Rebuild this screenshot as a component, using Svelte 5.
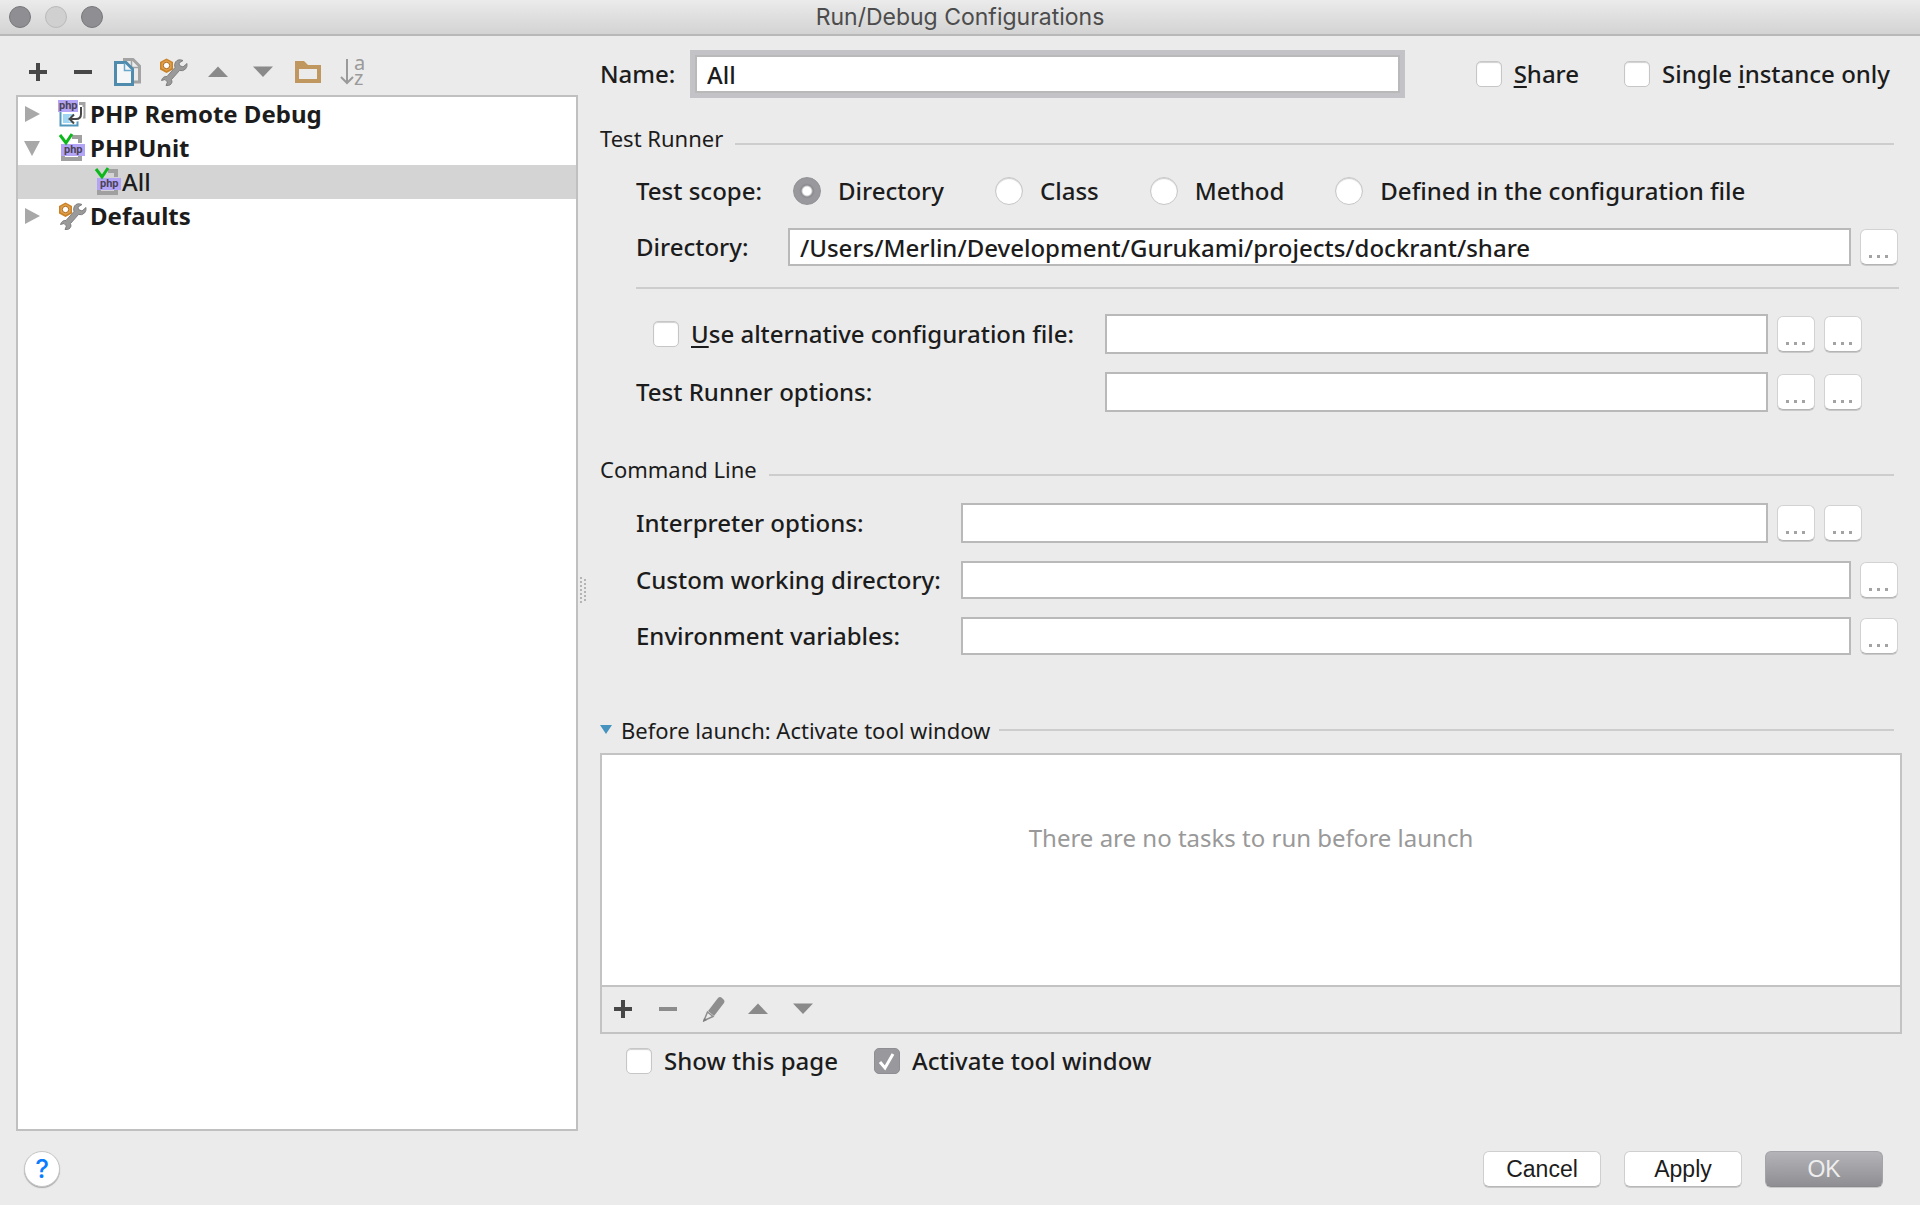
<script>
	let name = $state('All');
	let scope = $state('directory');
	let directory = $state('/Users/Merlin/Development/Gurukami/projects/dockrant/share');
	let share = $state(false);
	let single = $state(false);
	let alternative = $state(false);
	let showPage = $state(false);
	let activate = $state(true);

	const scopes = [
		{ id: 'directory', label: 'Directory' },
		{ id: 'class', label: 'Class' },
		{ id: 'method', label: 'Method' },
		{ id: 'file', label: 'Defined in the configuration file' },
	];

	const commandRows = [
		{ id: 'interpreter', label: 'Interpreter options:', buttons: 2 },
		{ id: 'workdir', label: 'Custom working directory:', buttons: 1 },
		{ id: 'env', label: 'Environment variables:', buttons: 1 },
	];

	const tree = [
		{ label: 'PHP Remote Debug', icon: 'remote', arrow: 'closed' },
		{ label: 'PHPUnit', icon: 'phpunit', arrow: 'open' },
		{ label: 'All', icon: 'phpunit', child: true },
		{ label: 'Defaults', icon: 'defaults', arrow: 'closed' },
	];

	const treeTools = [
		['add', 'Add'],
		['remove', 'Remove'],
		['copy', 'Copy'],
		['defaults', 'Edit defaults'],
		['up', 'Move up'],
		['down', 'Move down'],
		['folder', 'Create folder'],
		['sort', 'Sort'],
	];

	const taskTools = [
		['add', 'Add task'],
		['remove-off', 'Remove task'],
		['edit', 'Edit task'],
		['up', 'Move task up'],
		['down', 'Move task down'],
	];
</script>

{#snippet icon(kind)}
	<svg class="icon" viewBox="0 0 28 28" aria-hidden="true">
		{#if kind == 'add'}
			<path d="M5 14h18M14 5v18" stroke="#474747" stroke-width="4" />
		{:else if kind == 'remove'}
			<path d="M5 14h18" stroke="#474747" stroke-width="4" />
		{:else if kind == 'remove-off'}
			<path d="M5 14h18" stroke="#8c8c8c" stroke-width="4" />
		{:else if kind == 'up'}
			<path d="M4 19 14 8.500l10 10.500z" fill="#8a8a8a" />
		{:else if kind == 'down'}
			<path d="M4 8.500h20L14 19z" fill="#8a8a8a" />
		{:else if kind == 'copy'}
			<path d="M9 1.500h10l6.500 6.500V24h-6" fill="none" stroke="#a3a3a3" stroke-width="3" />
			<path d="M17.500 2v7.500h7" fill="none" stroke="#a3a3a3" stroke-width="1.500" />
			<path d="M1.500 4.500H12l6.500 6.500v15.500h-17z" fill="#f4f6f8" stroke="#4f8bad" stroke-width="3" />
			<path d="M10.500 5v7.500h7.500" fill="none" stroke="#6aa6c8" stroke-width="1.500" />
		{:else if kind == 'defaults'}
			<path d="M7.500.500l6.500 3.500v7.500L7.500 15 1 11.500V4z" fill="#c98227" />
			<path d="M7.500 2l5 2.700v5.600L7.500 13l-5-2.700V4.700z" fill="#e3a04a" />
			<circle cx="7.500" cy="7.500" r="3.200" fill="#fff" stroke="#a9661a" stroke-width="1" />
			<path
				d="M24 2.500q-5-2-7.500 1.500-1.500 2.500-.500 5.500L8 18.500q-4-.500-5.500 4l3.500-1 2.500 2.500-1.500 3.500q5 .500 6-3.500l-.500-2.500 8-9q3.500 1 6-1.500 2-2.500 1.500-5.500l-4 3.500-3.500-1.500-.500-2.500z"
				fill="#9a9a9a" stroke="#7f7f7f" stroke-width="1" />
		{:else if kind == 'folder'}
			<path d="M1 3h9l4 4h13v18H1zM5 11v10h18V11z" fill="#c0975f" fill-rule="evenodd" />
		{:else if kind == 'sort'}
			<path d="M8 1v23M2 19l6 6 6-6" fill="none" stroke="#9a9a9a" stroke-width="2" />
			<text x="15" y="12" font-size="20">a</text>
			<text x="15" y="27" font-size="20">z</text>
		{:else if kind == 'edit'}
			<path d="M19 3q2-2 4 0l2 2q1 1 0 3L15 21l-6-5z" fill="#8e8e8e" />
			<path d="M8.500 17l5.500 4.500-9 4z" fill="#ebebeb" stroke="#8e8e8e" stroke-width="1.500" />
			<path d="M4 27l1-4 3 2z" fill="#7d7d7d" />
		{:else if kind == 'remote'}
			<path d="M21 3.500h5V17h-5" fill="none" stroke="#a3a3a3" stroke-width="3" />
			<path d="M2.500 12v13.500h17V20" fill="none" stroke="#5297bd" stroke-width="2" />
			<path d="M5 14h11v9H5z" fill="#9fd6f3" />
			<path d="M23 7v8q0 4-4 4h-8" fill="none" stroke="#fff" stroke-width="5" />
			<path d="M23 7v7q0 5-5 5h-7M16 14.500l-4.500 4.500 4.500 4.500" fill="none" stroke="#474747" stroke-width="2" />
			<path d="M0 0h20v12H0z" fill="#b4a4f5" />
			<text class="php" x="1" y="9" font-size="11">php</text>
		{:else if kind == 'phpunit'}
			<path d="M14 3h8v6M5 21v4h17v-4" fill="none" stroke="#a0a0a0" stroke-width="4" />
			<path d="M3 10h24v12H3z" fill="#b4a4f5" />
			<text class="php" x="6" y="19" font-size="11">php</text>
			<path d="M2 1l6 8 6-9" fill="none" stroke="#0db81c" stroke-width="3" />
		{/if}
	</svg>
{/snippet}

{#snippet browse(count, what)}
	{#each Array(count) as _, i}
		<button class="browse" aria-label="{what} {i + 1}">
			<svg viewBox="0 0 36 36" aria-hidden="true">
				<path d="M8 25h3v3H8zM16 25h3v3h-3zM24 25h3v3h-3z" fill="#a3a3a3" />
			</svg>
		</button>
	{/each}
{/snippet}

<div class="dialog">
	<header class="titlebar">
		<div class="lights">
			<button aria-label="Close"></button>
			<button class="off" aria-label="Minimize"></button>
			<button aria-label="Zoom"></button>
		</div>
		<h1>Run/Debug Configurations</h1>
	</header>

	<main>
		<aside>
			<div class="tools">
				{#each treeTools as [kind, label]}
					<button class="tool" aria-label={label}>{@render icon(kind)}</button>
				{/each}
			</div>
			<ul class="tree">
				{#each tree as node}
					<li class:child={node.child}>
						<span class="arrow">
							{#if node.arrow == 'closed'}
								<svg viewBox="0 0 16 16"><path d="M1 0l15 8-15 8z" fill="#a8a8a8" /></svg>
							{:else if node.arrow == 'open'}
								<svg viewBox="0 0 16 16"><path d="M0 1h16L8 16z" fill="#a8a8a8" /></svg>
							{/if}
						</span>
						{@render icon(node.icon)}
						<span>{node.label}</span>
					</li>
				{/each}
			</ul>
		</aside>

		<div class="splitter">
			<svg width="8" height="28" viewBox="0 0 8 28" aria-hidden="true">
				<path d="M2 1v26" stroke="#b4b4b4" stroke-width="2" stroke-dasharray="2 2" />
				<path d="M6 3v24" stroke="#b4b4b4" stroke-width="2" stroke-dasharray="2 2" />
			</svg>
		</div>

		<section class="config">
			<div class="row name-row">
				<label for="name">Name:</label>
				<input id="name" class="focused" type="text" bind:value={name}>
				<label class="check share"><input type="checkbox" bind:checked={share}><span><u>S</u>hare</span></label>
				<label class="check"><input type="checkbox" bind:checked={single}><span>Single <u>i</u>nstance only</span></label>
			</div>

			<h2 class="first">Test Runner</h2>
			<div class="group">
				<div class="row scope">
					<span class="caption">Test scope:</span>
					{#each scopes as s}
						<label class="check"><input type="radio" name="scope" value={s.id} bind:group={scope}>{s.label}</label>
					{/each}
				</div>
				<div class="row dir">
					<label for="directory">Directory:</label>
					<input id="directory" type="text" bind:value={directory}>
					{@render browse(1, 'Browse directory')}
				</div>
				<hr>
				<div class="row wide two">
					<div class="caption">
						<label class="check alt"><input type="checkbox" bind:checked={alternative}><span><u>U</u>se alternative configuration file:</span></label>
					</div>
					<input type="text" aria-label="Alternative configuration file">
					{@render browse(2, 'Browse configuration file')}
				</div>
				<div class="row wide two">
					<label for="options">Test Runner options:</label>
					<input id="options" type="text">
					{@render browse(2, 'Edit test runner options')}
				</div>
			</div>

			<h2 class="second">Command Line</h2>
			<div class="group commands">
				{#each commandRows as row}
					<div class="row" class:two={row.buttons == 2}>
						<label for={row.id}>{row.label}</label>
						<input id={row.id} type="text">
						{@render browse(row.buttons, row.label)}
					</div>
				{/each}
			</div>

			<h2 class="launch">
				<svg width="12" height="10" viewBox="0 0 12 10" aria-hidden="true"><path d="M0 0h12L6 9z" fill="#4793bf" /></svg>
				Before launch: Activate tool window
			</h2>
			<div class="tasks">
				<p>There are no tasks to run before launch</p>
				<div class="tools">
					{#each taskTools as [kind, label]}
						<button class="tool" aria-label={label}>{@render icon(kind)}</button>
					{/each}
				</div>
			</div>
			<div class="row after">
				<label class="check"><input type="checkbox" bind:checked={showPage}>Show this page</label>
				<label class="check"><input type="checkbox" bind:checked={activate}>Activate tool window</label>
			</div>
		</section>
	</main>

	<footer>
		<button class="help" aria-label="Help">?</button>
		<div class="actions">
			<button>Cancel</button>
			<button>Apply</button>
			<button class="primary">OK</button>
		</div>
	</footer>
</div>

<style>
	:global(body) { margin:0; background:#ebebeb }
	.dialog {
		box-sizing: border-box;
		display: flex;
		flex-direction: column;
		min-height: 100vh;
		background: #ebebeb;
		color: #1c1c1c;
		font: 500 24px/30px "Noto Sans", "Open Sans", sans-serif;
	}
	button, input { font:inherit; color:inherit; margin:0; padding:0; box-sizing:border-box }
	h1, h2, ul, p { margin:0; padding:0; font-weight:400 }
	svg { display:block }
	u { text-decoration-thickness:2px; text-underline-offset:3px; text-decoration-skip-ink:none }

	.titlebar {
		display: grid;
		grid-template-columns: 1fr auto 1fr;
		align-items: center;
		height: 34px;
		border-bottom: 2px solid #b8b8b8;
		background: linear-gradient(#ebebeb, #d3d3d3);
	}
	.titlebar h1 { font:23px/30px Inter, Roboto, sans-serif; color:#4c4c4c }
	.lights { display:flex; gap:14px; padding-left:9px }
	.lights button { width:22px; height:22px; border:1px solid #77777c; border-radius:50%; background:#8e8e93 }
	.lights .off { border-color:#bababa; background:#d0d0d0 }

	main { flex:1; display:flex }
	aside { width:578px; flex:none; display:flex; flex-direction:column; padding-left:16px; box-sizing:border-box }
	.tools { display:flex; gap:17px; align-items:center; box-sizing:border-box }
	.tool { width:28px; height:28px; border:0; background:none }
	.icon { width:28px; height:28px; flex:none; overflow:visible }
	.icon text { font-family:"Noto Sans", sans-serif; font-weight:400; fill:#9a9a9a }
	.icon .php { font-family:Roboto, sans-serif; font-weight:700; fill:#4a4358 }
	aside .tools { height:59px; padding:12px 0 0 8px }
	.tree { flex:1; list-style:none; border:2px solid #c0c0c0; background:#fff }
	.tree li { display:flex; align-items:center; height:34px; font-weight:700; line-height:32px }
	.tree .icon { margin-right:4px }
	.tree .child { font-weight:500; background:#d4d4d4; padding-left:36px }
	.tree .child .icon { margin-right:0 }
	.arrow { width:34px; padding-left:6px; box-sizing:content-box }
	.arrow svg { width:16px; height:16px }

	.splitter { width:22px; flex:none; display:flex; align-items:center; padding-top:12px; box-sizing:border-box }
	.splitter svg { margin-left:1px }

	.config { flex:1; min-width:0; padding:14px 18px 0 0 }
	.row { display:flex; align-items:center }
	.row input[type="text"] {
		flex: 1;
		min-width: 0;
		height: 38px;
		padding: 0 10px;
		border: 2px solid #b9b9b9;
		border-radius: 0;
		outline: none;
		background: #fff;
	}
	.row .focused {
		height: 36px;
		margin: 5px;
		padding: 0 4px;
		border-color: #b4b4b8;
		border-radius: 1px;
		box-shadow: 0 0 0 5px #c3c3c7;
	}
	.name-row { padding-right:12px }
	.name-row > label:first-child { width:90px }
	.share { margin:0 45px 0 71px }

	.check { display:flex; align-items:center; gap:12px; white-space:nowrap }
	.check input {
		appearance: none;
		width: 26px;
		height: 26px;
		border: 1px solid #c6c6c6;
		border-radius: 5px;
		background: #fff;
		box-shadow: inset 0 1px 1px #d0d0d0;
	}
	.check input[type="radio"] { width:28px; height:28px; border-radius:50% }
	.check input[type="checkbox"]:checked {
		border-color: #8e8e93;
		background: #98989d url('data:image/svg+xml,<svg xmlns="http://www.w3.org/2000/svg" viewBox="0 0 24 24"><path d="M5 13l5 6L18 5" fill="none" stroke="white" stroke-width="3"/></svg>');
		box-shadow: none;
	}
	.check input[type="radio"]:checked {
		border-color: #929297;
		background: radial-gradient(circle, #fff 4px, #8a8a8f 6px, #98989d 8px);
		box-shadow: none;
	}

	h2 { display:flex; align-items:center; gap:12px; padding-right:8px; font-size:22px; line-height:30px }
	h2::after { content:''; flex:1; height:2px; margin-top:12px; background:#cdcdcd }
	.first { margin-top:25px }
	.second { margin-top:42px }
	.launch { margin-top:60px; gap:9px }
	.launch::after { margin-top:0 }

	.group { padding-left:36px }
	.scope { margin-top:23px }
	.scope .caption { width:157px }
	.scope .check { gap:17px; margin-right:51px }
	.dir { margin-top:22px }
	.dir label { width:152px }
	hr { height:2px; margin:21px 3px 25px 0; border:0; background:#cdcdcd }
	.wide > :first-child { width:469px }
	.wide + .wide { margin-top:18px }
	.alt { padding-left:17px }
	.commands { display:flex; flex-direction:column; gap:18px; margin-top:19px }
	.commands label { width:325px }
	.group .row:not(.scope) { padding-right:4px }
	.group .row.two { padding-right:40px }
	.row.two input[type="text"] { height:40px }
	.browse {
		width: 38px;
		height: 36px;
		margin-left: 9px;
		border: 1px solid #d2d2d2;
		border-bottom-color: #b4b4b4;
		border-radius: 6px;
		background: #fff;
		box-shadow: 0 1px 0 #c9c9c9;
	}

	.tasks { margin-top:8px; border:2px solid #c3c3c3 }
	.tasks p { height:230px; padding-top:68px; box-sizing:border-box; background:#fff; color:#999; text-align:center }
	.tasks .tools { height:47px; padding:0 0 2px 7px; border-top:2px solid #c3c3c3 }
	.after { margin-top:12px; padding-left:26px; gap:36px }

	footer {
		display: flex;
		align-items: center;
		justify-content: space-between;
		box-sizing: border-box;
		height: 74px;
		padding: 2px 37px 0 24px;
	}
	.help {
		width: 36px;
		height: 36px;
		border: 1px solid #c6c6c6;
		border-radius: 50%;
		background: #fff;
		box-shadow: 0 1px 1px #aaa;
		color: #0a7cff;
		font: 500 26px/34px Inter, Roboto, sans-serif;
	}
	.actions { display:flex; gap:23px }
	.actions button {
		width: 118px;
		height: 36px;
		border: 1px solid #cfcfcf;
		border-bottom-color: #b8b8b8;
		border-radius: 6px;
		background: #fff;
		box-shadow: 0 1px 0 #c9c9c9;
		font: 23px/34px "Liberation Sans", sans-serif;
	}
	.actions .primary { border-color:#a3a3a8; border-bottom-color:#88888d; background:linear-gradient(#b3b3b8, #8e8e93); color:#eee }
</style>
